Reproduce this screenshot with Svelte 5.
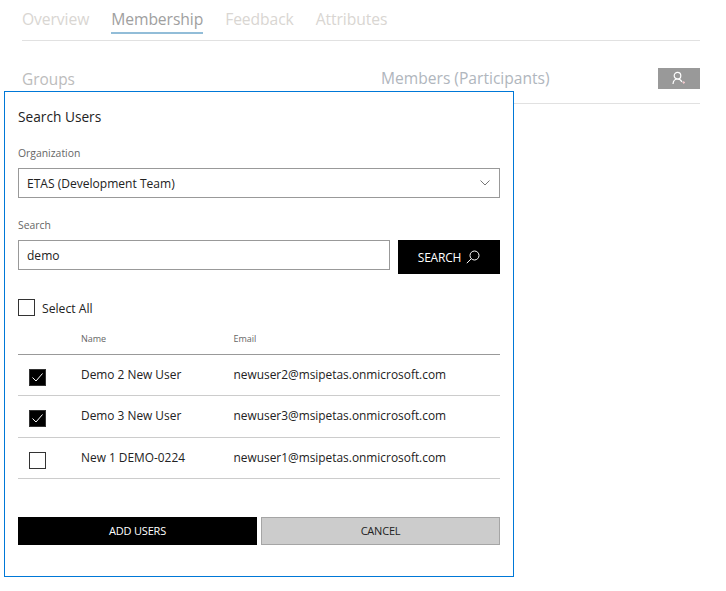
<script>
  let users = [
    { name: 'Demo 2 New User', email: 'newuser2@msipetas.onmicrosoft.com', checked: true },
    { name: 'Demo 3 New User', email: 'newuser3@msipetas.onmicrosoft.com', checked: true },
    { name: 'New 1 DEMO-0224', email: 'newuser1@msipetas.onmicrosoft.com', checked: false }
  ];
  let tabs = ['Overview', 'Membership', 'Feedback', 'Attributes'];
</script>

<div class="page">
  <nav class="tabs">
    {#each tabs as tab}
      <span class="tab" class:active={tab === 'Membership'}>{tab}</span>
    {/each}
  </nav>

  <div class="columns">
    <div class="groups">Groups</div>
    <div class="members">
      <span>Members (Participants)</span>
      <button class="add-member" type="button" aria-label="Add member">
        <svg width="16" height="16" viewBox="0 0 16 16" fill="none" stroke="#fff" stroke-width="1.2">
          <circle cx="6.5" cy="4.7" r="3.3" />
          <path d="M2 13c.3-3.2 2-5 4.5-5 2 0 3.5 1 4.5 3" />
          <path d="M11.5 11.5h2.5M12.7 10.2v2.6" stroke="#f0c8cc" />
        </svg>
      </button>
    </div>
  </div>

  <div class="dialog">
    <h2>Search Users</h2>

    <div class="label org-label">Organization</div>
    <div class="select">
      <span>ETAS (Development Team)</span>
      <svg width="10" height="6" viewBox="0 0 10 6" fill="none" stroke="#777" stroke-width="1">
        <path d="M.5.5 5 5 9.5.5" />
      </svg>
    </div>

    <div class="label search-label">Search</div>
    <div class="search-row">
      <div class="input">demo</div>
      <button class="search-btn" type="button">
        SEARCH
        <svg width="14" height="14" viewBox="0 0 14 14" fill="none" stroke="#fff" stroke-width="1">
          <circle cx="8.5" cy="5.5" r="4.5" />
          <path d="M5.2 8.8.8 13.2" />
        </svg>
      </button>
    </div>

    <div class="select-all">
      <span class="box"></span>
      <span>Select All</span>
    </div>

    <div class="table">
      <div class="row head">
        <span></span>
        <span>Name</span>
        <span>Email</span>
      </div>
      {#each users as user}
        <div class="row">
          <span class="box small" class:checked={user.checked}>
            {#if user.checked}
              <svg width="11" height="9" viewBox="0 0 11 9" fill="none" stroke="#fff" stroke-width="1">
                <path d="M.5 4.5 4 8l6.5-7.5" />
              </svg>
            {/if}
          </span>
          <span>{user.name}</span>
          <span>{user.email}</span>
        </div>
      {/each}
    </div>

    <div class="actions">
      <button class="primary" type="button">ADD USERS</button>
      <button class="secondary" type="button">CANCEL</button>
    </div>
  </div>
</div>

<style>
  :global(body) {
    background: #fff;
  }

  .page {
    position: relative;
    width: 726px;
    height: 591px;
    box-sizing: border-box;
    padding: 0 26px 0 22px;
    overflow: hidden;
    font-family: "Open Sans", "Noto Sans", sans-serif;
    color: #000;
  }

  .tabs {
    display: flex;
    gap: 22px;
    height: 40px;
    border-bottom: 1px solid #e1e1e1;
  }

  .tab {
    height: 23px;
    padding-top: 9px;
    font-size: 15.7px;
    line-height: 21px;
    color: #d9d6d2;
    border-bottom: 2px solid transparent;
    letter-spacing: -0.1px;
  }

  .tab.active {
    color: #a0a0a0;
    border-bottom-color: #92bdd8;
  }

  .columns {
    display: flex;
    height: 63px;
    border-bottom: 1px solid #e1e1e1;
    box-sizing: border-box;
  }

  .groups {
    width: 359px;
    padding-top: 28px;
    font-size: 15.4px;
    line-height: 21px;
    color: #bcbcbc;
  }

  .members {
    flex: 1;
    display: flex;
    justify-content: space-between;
    align-items: flex-start;
    padding-top: 27px;
    font-size: 15.6px;
    line-height: 21px;
    color: #b0b6bd;
  }

  .add-member {
    width: 42px;
    height: 21px;
    border: 0;
    padding: 0;
    background: #999;
    display: flex;
    align-items: center;
    justify-content: center;
  }

  .dialog {
    position: absolute;
    left: 4px;
    top: 91px;
    width: 510px;
    height: 486px;
    box-sizing: border-box;
    padding: 0 13px;
    background: #fff;
    border: 1px solid #0078d7;
  }

  h2 {
    margin: 15px 0 0;
    font-size: 13.7px;
    line-height: 20px;
    font-weight: 400;
    color: #222;
  }

  .label {
    font-size: 10.4px;
    line-height: 14px;
    color: #666;
  }

  .org-label {
    margin-top: 19px;
  }

  .search-label {
    margin-top: 20px;
  }

  .select {
    margin-top: 8px;
    height: 30px;
    box-sizing: border-box;
    border: 1px solid #999;
    padding: 0 9px 0 8px;
    display: flex;
    align-items: center;
    justify-content: space-between;
    font-size: 12.05px;
    color: #222;
  }

  .search-row {
    margin-top: 8px;
    display: flex;
    gap: 8px;
    align-items: flex-start;
  }

  .input {
    width: 372px;
    height: 30px;
    box-sizing: border-box;
    border: 1px solid #999;
    padding-left: 8px;
    font-size: 12.05px;
    line-height: 29px;
    color: #222;
  }

  .search-btn {
    width: 102px;
    height: 34px;
    border: 0;
    padding: 0;
    background: #000;
    color: #fff;
    font: inherit;
    font-size: 12px;
    display: flex;
    align-items: center;
    justify-content: center;
    gap: 5px;
    letter-spacing: -0.2px;
  }

  .select-all {
    margin-top: 25px;
    display: flex;
    align-items: center;
    gap: 7px;
    font-size: 12.2px;
    line-height: 15px;
    color: #222;
  }

  .select-all span:last-child {
    padding-top: 2px;
  }

  .box {
    width: 17px;
    height: 17px;
    box-sizing: border-box;
    border: 1px solid #333;
    display: flex;
    align-items: center;
    justify-content: center;
    flex: none;
  }

  .box.small {
    margin-left: 11px;
    margin-top: 7px;
  }

  .box.checked {
    background: #000;
  }

  .table {
    margin-top: 13px;
  }

  .row {
    display: grid;
    grid-template-columns: 63px 152.5px 1fr;
    align-items: center;
    height: 41.33px;
    box-sizing: border-box;
    padding-bottom: 2px;
    border-bottom: 1px solid #ccc;
    font-size: 11.9px;
    color: #222;
  }

  .row.head {
    height: 26px;
    padding-bottom: 6px;
    font-size: 9px;
    color: #666;
    border-bottom-color: #999;
  }

  .actions {
    margin-top: 38px;
    display: flex;
    gap: 4px;
  }

  .actions button {
    width: 239px;
    height: 28px;
    box-sizing: border-box;
    font: inherit;
    font-size: 11px;
    padding: 0;
    letter-spacing: -0.2px;
  }

  .primary {
    border: 0;
    background: #000;
    color: #fff;
  }

  .secondary {
    border: 1px solid #a5a5a5;
    background: #ccc;
    color: #222;
  }
</style>
